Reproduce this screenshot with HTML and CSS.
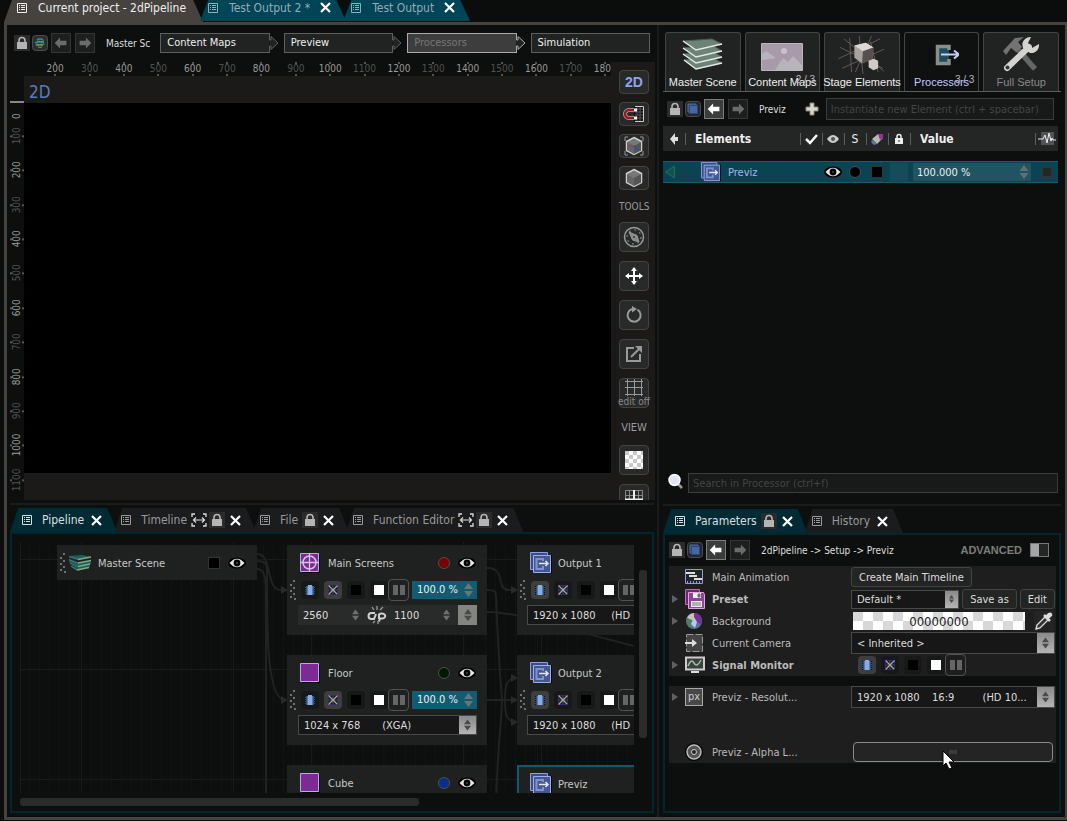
FILE: index.html
```html
<!DOCTYPE html>
<html lang="en">
<head>
    <meta charset="UTF-8">
    <meta name="viewport" content="width=device-width, initial-scale=1.0">
    <title>Current project - 2dPipeline</title>
    <link rel="stylesheet" href="styles.css">
</head>
<body>
    <!-- Icon sprite -->
    <svg class="sprite" aria-hidden="true">
        <symbol id="i-list" viewBox="0 0 10 10">
            <path d="M.5.5h9v9h-9z" fill="none" stroke="currentColor"/>
            <path d="M2 2.500h1M4 2.500h4M2 4.500h1M4 4.500h4M2 6.500h1M4 6.500h4" stroke="currentColor"/>
        </symbol>
        <symbol id="i-close" viewBox="0 0 11 11">
            <path d="M1 1l9 9M10 1l-9 9" stroke="#fff" stroke-width="2.2"/>
        </symbol>
        <symbol id="i-lock" viewBox="0 0 16 16">
            <path d="M0 0h16v16H0z" fill="#2b2b2b"/>
            <path d="M5 8V5.500a3 3 0 0 1 6 0V8" fill="none" stroke="#b5b5b5" stroke-width="1.600"/>
            <path d="M3 7h10v7H3z" fill="#b5b5b5"/>
        </symbol>
        <symbol id="i-lock-small" viewBox="0 0 10 12">
            <path d="M3 6V3.500a2 2 0 0 1 4 0V6" fill="none" stroke="#eee" stroke-width="1.500"/>
            <path d="M1 5h8v6H1z" fill="#eee"/><path d="M4.500 7h1v2h-1z" fill="#333"/>
        </symbol>
        <symbol id="i-left" viewBox="0 0 20 20">
            <path d="M3 10l6-6v3.500h7v5H9V16z" fill="currentColor"/>
        </symbol>
        <symbol id="i-right" viewBox="0 0 20 20">
            <path d="M17 10l-6-6v3.500H4v5h7V16z" fill="currentColor"/>
        </symbol>
        <symbol id="i-layer" viewBox="0 0 16 16">
            <rect x=".5" y=".5" width="15" height="15" rx="3" fill="#252729" stroke="#4a4d50"/>
            <path d="M3 3h8v8H3z" fill="#35507c" stroke="#4a6fa8"/><path d="M4.500 4.500h8v8h-8z" fill="#4568a4" stroke="#2c4775"/>
        </symbol>
        <symbol id="i-globe" viewBox="0 0 16 16">
            <rect x=".5" y=".5" width="15" height="15" rx="3" fill="#2c2d2d" stroke="#4a4d4d"/>
            <path d="M5 4.500q3-1 6 0M3 7.500q4-1 9 0M4 10.500q4-1 7 0" fill="none" stroke="#2a8e98" stroke-width="1.500"/>
            <path d="M5 6q4 1 7 0M3.500 9q4 1 9 0M6 12q2 .5 4 0" fill="none" stroke="#6f9a65"/>
        </symbol>
        <symbol id="i-eye" viewBox="0 0 18 12">
            <ellipse cx="9" cy="6" rx="9" ry="5.500" fill="#000"/>
            <path d="M1.500 6Q9-2.500 16.500 6 9 14.500 1.500 6z" fill="#e8e8e8"/><circle cx="9" cy="6" r="3.400" fill="#050505"/>
            <circle cx="9" cy="6" r="1" fill="#444"/>
        </symbol>
        <symbol id="i-fit" viewBox="0 0 16 14">
            <path d="M4 1H1v3M12 1h3v3M4 13H1v-3M12 13h3v-3" fill="none" stroke="#ddd" stroke-width="1.300"/>
            <path d="M3 7h10M5 4.500L2.500 7 5 9.500M11 4.500L13.500 7 11 9.500" fill="none" stroke="#ddd" stroke-width="1.200"/>
        </symbol>
        <symbol id="i-processor" viewBox="0 0 22 22">
            <path d="M3 3h19v18H3z" fill="#000"/>
            <path d="M.5.5h17v17H.5z" fill="#3c4d86" stroke="#8f9fe4"/>
            <path d="M3.500 3.500h17v17h-17z" fill="#46598f" stroke="#9dacf0"/>
            <path d="M13 9V7H6.500v10H13v-3" fill="none" stroke="#8193cf" stroke-width="2"/>
            <path d="M9 11.500h9M15.500 9l2.500 2.500-2.500 2.500" fill="none" stroke="#dfe6ff" stroke-width="1.500"/>
        </symbol>
        <symbol id="i-screen" viewBox="0 0 20 20">
            <path d="M2 2h18v18H2z" fill="#000"/>
            <path d="M.5.5h18v18H.5z" fill="#7d2a93" stroke="#aab0ee"/>
        </symbol>
        <symbol id="i-target" viewBox="0 0 20 20">
            <path d="M2 2h18v18H2z" fill="#000"/>
            <path d="M.5.5h18v18H.5z" fill="#7d2a93" stroke="#aab0ee"/>
            <circle cx="9.500" cy="9.500" r="6.500" fill="none" stroke="#d7c3dd" stroke-width="1.500"/>
            <path d="M9.500 0v19M0 9.500h19" stroke="#d7c3dd" stroke-width="1.300"/>
        </symbol>
        <symbol id="i-stack" viewBox="0 0 22 18">
            <path d="M0 2l13-1 9 2-13 3zM0 6l9 3 13-2v3L9 12 0 8zM1 10l8 3 12-2v2L9 16z" fill="#1d5f5d"/>
            <path d="M9 5.500L22 3M9 9L22 6.500M9 12.500L21 10M8 16l12-2.500" stroke="#81a989" stroke-width="1.700"/>
            <path d="M0 2.500l9 3M0 5.500L9 9M1 9l8 3.500M2 12l6 4" stroke="#3a7d80" stroke-width="1.200"/>
        </symbol>
        <symbol id="i-dots" viewBox="0 0 8 20">
            <path d="M4 0h2v2H4zM1 4h2v2H1zM4 7h2v2H4zM1 10h2v2H1zM4 13h2v2H4zM1 16h2v2H1zM5 18h2v2H5z" fill="#6f7271"/>
        </symbol>
        <symbol id="i-film" viewBox="0 0 18 18">
            <path d="M4 5h10v9H4z" fill="#245577"/><path d="M6 5h6v9H6z" fill="#5579b0"/><path d="M7 4h4v10H7z" fill="#8eaae0"/>
            <path d="M4.500 5v9M13.500 5v9" stroke="#0b141b" stroke-dasharray="1 1"/>
        </symbol>
        <symbol id="i-cross" viewBox="0 0 18 18">
            <path d="M4.500 4.500h9v9h-9z" fill="#151515" stroke="#28306d"/>
            <path d="M9 5v8M5 9h8" stroke="#555"/>
            <path d="M5 5l8 8M13 5l-8 8" stroke="#a4a7aa" stroke-width="1.300"/>
            <path d="M4 4h2v1H4zM13 4h1v2h-1zM4 13h2v1H4z" fill="#b33a9a"/>
        </symbol>
        <symbol id="i-black" viewBox="0 0 18 18"><path d="M4 4h10v10H4z" fill="#000"/></symbol>
        <symbol id="i-white" viewBox="0 0 18 18"><path d="M4 4h10v10H4z" fill="#fff"/></symbol>
        <symbol id="i-pause" viewBox="0 0 18 18"><path d="M3 4h5v10H3zM10 4h5v10h-5z" fill="#656565"/></symbol>
        <symbol id="i-updown" viewBox="0 0 9 14">
            <path d="M0 6l4.500-6L9 6zM0 8l4.500 6L9 8z" fill="currentColor"/>
        </symbol>
        <symbol id="i-unlink" viewBox="0 0 20 18">
            <path d="M8 7H4.500a3 3 0 0 0 0 6H7l2-5M12 13V8.500a3.500 2.500 0 1 1 3.500 4H13l-1 3" fill="none" stroke="#d0d0d0" stroke-width="2"/>
            <path d="M10 4V0M7 4L5 1M13 4l3-3M11 15v3M8 15l-2 2" stroke="#999" stroke-width="1.300"/>
        </symbol>
        <symbol id="i-cube" viewBox="0 0 20 20">
            <path d="M10 1.500l7.500 4v9l-7.500 4-7.500-4v-9z" fill="#777" stroke="#cfcfcf" stroke-width="1.500"/>
            <path d="M10 10l7-4v8.500l-7 3.500z" fill="#555"/><path d="M3 6l7 4v8l-7-4z" fill="#666"/>
        </symbol>
        <symbol id="i-expand" viewBox="0 0 6 8"><path d="M0 0l6 4-6 4z" fill="#5e6160"/></symbol>
    </svg>

    <nav class="project-tabs">
        <div class="tab current">
            <svg width="10" height="10"><use href="#i-list"/></svg>
            <button class="tab-name">Current project - 2dPipeline</button>
        </div>
        <div class="tab">
            <svg width="10" height="10"><use href="#i-list"/></svg>
            <button class="tab-name">Test Output 2 *</button>
            <button class="tab-close" aria-label="Close"><svg width="11" height="11"><use href="#i-close"/></svg></button>
        </div>
        <div class="tab">
            <svg width="10" height="10"><use href="#i-list"/></svg>
            <button class="tab-name">Test Output</button>
            <button class="tab-close" aria-label="Close"><svg width="11" height="11"><use href="#i-close"/></svg></button>
        </div>
    </nav>

    <main class="frame">
        <div class="left-side">
            <section class="viewer">
                <div class="crumbs">
                    <svg width="16" height="16"><use href="#i-lock"/></svg>
                    <svg width="16" height="16"><use href="#i-globe"/></svg>
                    <button class="arrow" aria-label="Back"><svg width="18" height="18"><use href="#i-left"/></svg></button>
                    <button class="arrow" aria-label="Forward"><svg width="18" height="18"><use href="#i-right"/></svg></button>
                    <span class="crumb-name">Master Sc</span>
                    <div class="steps">
                        <div class="step"><button>Content Maps</button><svg width="11" height="20"><path d="M.5 0v7h1.500V3.500l7 6.500-7 6.500V13H.5v7"/></svg></div>
                        <div class="step"><button>Preview</button><svg width="11" height="20"><path d="M.5 0v7h1.500V3.500l7 6.500-7 6.500V13H.5v7"/></svg></div>
                        <div class="step active"><button>Processors</button><svg width="11" height="20"><path d="M.5 0v7h1.500V3.500l7 6.500-7 6.500V13H.5v7"/></svg></div>
                        <div class="step last"><button>Simulation</button></div>
                    </div>
                </div>
                <div class="stage">
                    <div class="ruler-x">
                        <span>200</span><span>300</span><span>400</span><span>500</span><span>600</span><span>700</span>
                        <span>800</span><span>900</span><span>1000</span><span>1100</span><span>1200</span><span>1300</span>
                        <span>1400</span><span>1500</span><span>1600</span><span>1700</span><span>1800</span>
                    </div>
                    <div class="ruler-y">
                        <b>0</b>
                        <span>100</span><span>200</span><span>300</span><span>400</span><span>500</span><span>600</span>
                        <span>700</span><span>800</span><span>900</span><span>1000</span><span>1100</span>
                    </div>
                    <div class="view">
                        <h2>2D</h2>
                        <div class="picture"></div>
                    </div>
                    <div class="toolbar">
                        <div class="modes">
                            <button class="mode-2d">2D</button>
                            <button aria-label="Snap"><svg width="22" height="18" viewBox="0 0 22 18">
                                <path d="M11 1h10v16H11z" fill="#101010"/><path d="M12 4h9M12 7h9M12 10h9M12 13h9M14 1v16M17 1v16" stroke="#555"/>
                                <path d="M12 1.500h8.500v15H12" fill="none" stroke="#ccc"/>
                                <path d="M11 5H6a4 4 0 0 0 0 8h5" fill="none" stroke="#aaa" stroke-width="4"/>
                                <path d="M11 5H6a4 4 0 0 0 0 8h5" fill="none" stroke="#a3131c" stroke-width="2.500"/>
                                <path d="M11 3.500h3v3h-3zM11 11.500h3v3h-3z" fill="#fff"/></svg></button>
                            <button aria-label="Axis cube"><svg width="20" height="20" viewBox="0 0 20 20"><use href="#i-cube"/>
                                <path d="M4 1H1v4M16 1h3v4M4 19H1v-4M16 19h3v-4" fill="none" stroke="#999"/>
                                <path d="M10 10l4-4" stroke="#4c9b56"/><path d="M10 10H5" stroke="#9b3653"/><path d="M10 10l4 4" stroke="#324fa8" stroke-width="2"/></svg></button>
                            <button aria-label="Cube"><svg width="20" height="20"><use href="#i-cube"/></svg></button>
                        </div>
                        <h3>TOOLS</h3>
                        <div class="tools">
                            <button aria-label="Navigate"><svg width="22" height="22" viewBox="0 0 22 22" fill="none" stroke="#999">
                                <circle cx="11" cy="11" r="9.500" stroke-width="1.500"/><circle cx="11" cy="11" r="7" stroke-dasharray="2 3.500"/>
                                <path d="M6 6l8 3.500 2 6.500-6.500-2z" fill="#888"/><circle cx="11" cy="11" r="1.500" fill="#222"/></svg></button>
                            <button aria-label="Move"><svg width="18" height="18" viewBox="0 0 18 18">
                                <path d="M9 2v14M2 9h14" stroke="#fff" stroke-width="2"/><path d="M9 0l3 4H6zM9 18l3-4H6zM0 9l4-3v6zM18 9l-4-3v6z" fill="#fff"/></svg></button>
                            <button aria-label="Rotate"><svg width="18" height="18" viewBox="0 0 18 18">
                                <path d="M12.500 3.600A6.500 6.500 0 1 1 7 3" fill="none" stroke="#999" stroke-width="2"/><path d="M7 0l5 3-5 3.500z" fill="#999"/></svg></button>
                            <button aria-label="Scale"><svg width="18" height="18" viewBox="0 0 18 18" fill="none" stroke="#999" stroke-width="2">
                                <path d="M9 3H2v13h13V9M6 12l8-8"/><path d="M10 1h7v7z" fill="#999" stroke="none"/></svg></button>
                            <button class="edit" aria-label="Edit grid"><svg width="18" height="17" viewBox="0 0 18 17">
                                <path d="M2.500 0v17M9.500 0v17M16.500 0v17M0 2.500h18M0 8.500h18M0 15.500h18" stroke="#999"/></svg><span>edit off</span></button>
                        </div>
                        <h3 class="view-title">VIEW</h3>
                        <div class="tools">
                            <button aria-label="Checkerboard"><i class="checker"></i></button>
                            <button class="grid-btn" aria-label="Grid"><svg width="18" height="17" viewBox="0 0 18 17">
                                <path d="M.5.5h17v16H.5zM4.500 0v17M13.500 0v17M0 5.500h18M0 13.500h18" fill="none" stroke="#888"/><path d="M9 0v17M0 9.500h18" stroke="#eee" stroke-width="2"/></svg></button>
                        </div>
                    </div>
                </div>
            </section>

            <section class="dock">
                <nav class="dock-tabs">
                    <div class="tab current">
                        <svg width="10" height="10"><use href="#i-list"/></svg>
                        <button class="tab-name">Pipeline</button>
                        <button class="tab-close" aria-label="Close"><svg width="11" height="11"><use href="#i-close"/></svg></button>
                    </div>
                    <div class="tab">
                        <svg width="10" height="10"><use href="#i-list"/></svg>
                        <button class="tab-name">Timeline</button>
                        <span class="tab-tools"><svg width="16" height="14"><use href="#i-fit"/></svg><svg width="16" height="16"><use href="#i-lock"/></svg></span>
                        <button class="tab-close" aria-label="Close"><svg width="11" height="11"><use href="#i-close"/></svg></button>
                    </div>
                    <div class="tab">
                        <svg width="10" height="10"><use href="#i-list"/></svg>
                        <button class="tab-name">File</button>
                        <span class="tab-tools"><svg width="16" height="16"><use href="#i-lock"/></svg></span>
                        <button class="tab-close" aria-label="Close"><svg width="11" height="11"><use href="#i-close"/></svg></button>
                    </div>
                    <div class="tab">
                        <svg width="10" height="10"><use href="#i-list"/></svg>
                        <button class="tab-name">Function Editor</button>
                        <span class="tab-tools"><svg width="16" height="14"><use href="#i-fit"/></svg><svg width="16" height="16"><use href="#i-lock"/></svg></span>
                        <button class="tab-close" aria-label="Close"><svg width="11" height="11"><use href="#i-close"/></svg></button>
                    </div>
                </nav>
                <div class="pane pipeline">
                    <div class="canvas">
                        <svg class="wires" width="1200" height="260">
                            <path class="grid" d="M.5 0v260M61.500 0v260M213.500 0v260M291.500 0v260M443.500 0v260M521.500 0v260M0 17.500h1200M0 127.500h1200M0 237.500h1200"/>
                            <path d="M237 12c16 0 8 36 24 36h4M237 19c12 0 10 6 10 20 0 50 0 119 18 119M237 27c12 0 8 20 9 60v180M467 26c20 0 8 22 22 22h8M467 48c12 0 8 0 10 30 2 40 4 68 5 79 0 20-4 40-6 103M467 70c30 0 60 12 147 34M467 158h30M497 136c-12 0-12 10-12 22s0 22 12 22"/>
                            <path class="head" d="M261 44l7 4-7 4zM261 154l7 4-7 4zM491 44l7 4-7 4zM491 132l7 4-7 4zM491 154l7 4-7 4zM491 176l7 4-7 4z"/>
                        </svg>

                        <article class="node master">
                            <header>
                                <svg width="8" height="20"><use href="#i-dots"/></svg>
                                <svg width="22" height="18"><use href="#i-stack"/></svg>
                                <h4>Master Scene</h4>
                                <i class="swatch"></i>
                                <svg width="18" height="12"><use href="#i-eye"/></svg>
                            </header>
                        </article>

                        <article class="node main-screens">
                            <header>
                                <svg width="20" height="20"><use href="#i-target"/></svg>
                                <h4>Main Screens</h4>
                                <i class="dot red"></i>
                                <svg width="18" height="12"><use href="#i-eye"/></svg>
                            </header>
                            <div class="signals">
                                <svg width="8" height="20"><use href="#i-dots"/></svg>
                                <button aria-label="Film"><svg width="18" height="18"><use href="#i-film"/></svg></button>
                                <button class="on" aria-label="Pattern"><svg width="18" height="18"><use href="#i-cross"/></svg></button>
                                <button aria-label="Black"><svg width="18" height="18"><use href="#i-black"/></svg></button>
                                <button aria-label="White"><svg width="18" height="18"><use href="#i-white"/></svg></button>
                                <button class="pause" aria-label="Pause"><svg width="18" height="18"><use href="#i-pause"/></svg></button>
                                <label class="percent"><input aria-label="Level" value="100.0 %"><svg width="9" height="14"><use href="#i-updown"/></svg></label>
                            </div>
                            <div class="size">
                                <input aria-label="Width" value="2560"><svg width="7" height="14"><use href="#i-updown"/></svg>
                                <svg class="unlink" width="20" height="18"><use href="#i-unlink"/></svg>
                                <input aria-label="Height" value="1100"><svg width="7" height="14"><use href="#i-updown"/></svg>
                                <span class="spin"><svg width="8" height="12"><use href="#i-updown"/></svg></span>
                            </div>
                        </article>

                        <article class="node floor">
                            <header>
                                <svg width="20" height="20"><use href="#i-screen"/></svg>
                                <h4>Floor</h4>
                                <i class="dot green"></i>
                                <svg width="18" height="12"><use href="#i-eye"/></svg>
                            </header>
                            <div class="signals">
                                <svg width="8" height="20"><use href="#i-dots"/></svg>
                                <button aria-label="Film"><svg width="18" height="18"><use href="#i-film"/></svg></button>
                                <button class="on" aria-label="Pattern"><svg width="18" height="18"><use href="#i-cross"/></svg></button>
                                <button aria-label="Black"><svg width="18" height="18"><use href="#i-black"/></svg></button>
                                <button aria-label="White"><svg width="18" height="18"><use href="#i-white"/></svg></button>
                                <button class="pause" aria-label="Pause"><svg width="18" height="18"><use href="#i-pause"/></svg></button>
                                <label class="percent"><input aria-label="Level" value="100.0 %"><svg width="9" height="14"><use href="#i-updown"/></svg></label>
                            </div>
                            <div class="combo">
                                <select aria-label="Resolution"><option>1024 x 768&nbsp;&nbsp;&nbsp;&nbsp;&nbsp;&nbsp;&nbsp;(XGA)</option></select>
                                <span class="spin"><svg width="7" height="12"><use href="#i-updown"/></svg></span>
                            </div>
                        </article>

                        <article class="node cube">
                            <header>
                                <svg width="20" height="20"><use href="#i-screen"/></svg>
                                <h4>Cube</h4>
                                <i class="dot blue"></i>
                                <svg width="18" height="12"><use href="#i-eye"/></svg>
                            </header>
                        </article>

                        <article class="node output-1">
                            <header>
                                <svg width="22" height="22"><use href="#i-processor"/></svg>
                                <h4>Output 1</h4>
                            </header>
                            <div class="signals">
                                <svg width="8" height="20"><use href="#i-dots"/></svg>
                                <button class="on" aria-label="Film"><svg width="18" height="18"><use href="#i-film"/></svg></button>
                                <button aria-label="Pattern"><svg width="18" height="18"><use href="#i-cross"/></svg></button>
                                <button aria-label="Black"><svg width="18" height="18"><use href="#i-black"/></svg></button>
                                <button aria-label="White"><svg width="18" height="18"><use href="#i-white"/></svg></button>
                                <button class="pause" aria-label="Pause"><svg width="18" height="18"><use href="#i-pause"/></svg></button>
                            </div>
                            <div class="combo">
                                <select aria-label="Resolution"><option>1920 x 1080&nbsp;&nbsp;&nbsp;&nbsp;&nbsp;(HD</option></select>
                            </div>
                        </article>

                        <article class="node output-2">
                            <header>
                                <svg width="22" height="22"><use href="#i-processor"/></svg>
                                <h4>Output 2</h4>
                            </header>
                            <div class="signals">
                                <svg width="8" height="20"><use href="#i-dots"/></svg>
                                <button class="on" aria-label="Film"><svg width="18" height="18"><use href="#i-film"/></svg></button>
                                <button aria-label="Pattern"><svg width="18" height="18"><use href="#i-cross"/></svg></button>
                                <button aria-label="Black"><svg width="18" height="18"><use href="#i-black"/></svg></button>
                                <button aria-label="White"><svg width="18" height="18"><use href="#i-white"/></svg></button>
                                <button class="pause" aria-label="Pause"><svg width="18" height="18"><use href="#i-pause"/></svg></button>
                            </div>
                            <div class="combo">
                                <select aria-label="Resolution"><option>1920 x 1080&nbsp;&nbsp;&nbsp;&nbsp;&nbsp;(HD</option></select>
                            </div>
                        </article>

                        <article class="node previz">
                            <header>
                                <svg width="22" height="22"><use href="#i-processor"/></svg>
                                <h4>Previz</h4>
                            </header>
                        </article>
                    </div>
                    <div class="scroll-y"><i></i></div>
                    <div class="scroll-x"><i></i></div>
                </div>
            </section>
        </div>

        <div class="right-side">
            <section class="browser">
                <nav class="scene-tabs">
                    <button>
                        <svg width="44" height="36" viewBox="0 0 44 36"><g fill="#6e8378" stroke="#4d5d55">
                            <path d="M3 23l28-3 10 6-26 6z"/><path d="M2 17l29-3 10 6-26 6z"/><path d="M2 11l29-3 10 6-26 6z"/><path d="M2 4l29-2 10 5-26 6z"/></g>
                            <path d="M2 4l13 9 26-6M2 11l13 9 26-6M2 17l13 9 26-6M3 23l12 9 26-6" fill="none" stroke="#e6ebe6" stroke-width="1.500"/></svg>
                        <span>Master Scene</span>
                    </button>
                    <button>
                        <svg width="44" height="36" viewBox="0 0 44 36"><path d="M1.500 6.500h41v27h-41z" fill="#a99aab" stroke="#b9b5b9"/>
                            <path d="M2 17l4-3 10 7-14 2zM15 33l8-12 5 4 5-6 9 9v5z" fill="#b9b4bb"/><circle cx="24" cy="14" r="3" fill="#c8c0c8"/></svg>
                        <span>Content Maps</span>
                        <em>2 / 3</em>
                    </button>
                    <button>
                        <svg width="50" height="40" viewBox="0 0 50 40"><path d="M12 2l2 36M22 0l4 40M35 0L18 38M2 12l45 22M0 24L44 3M6 3l42 34M4 34L48 14M34 6l8 32" stroke="#625c5a"/>
                            <path d="M17 10l12-3 8 5-1 12-11 5-8-6z" fill="#a8a3a0"/><path d="M17 10l12-3 8 5-11 4z" fill="#ddd8d4"/><path d="M26 16l11-4-1 12-11 5z" fill="#55504d"/>
                            <path d="M32 26l5-2 5 2v8l-5 2-5-3z" fill="#d1cbc8"/></svg>
                        <span>Stage Elements</span>
                    </button>
                    <button class="active">
                        <svg width="34" height="36" viewBox="0 0 34 36"><path d="M12 10h12v16H12z" fill="#1f4d5e"/><path d="M24 13V9.500H12.500v17H24V22" fill="none" stroke="#8c8c8c" stroke-width="3.500"/>
                            <path d="M16 17.500h17M29 13.500l5 4-5 4" fill="none" stroke="#c9cdf6" stroke-width="2"/></svg>
                        <span>Processors</span>
                        <em>3 / 3</em>
                    </button>
                    <button class="setup">
                        <svg width="40" height="38" viewBox="0 0 40 38"><path d="M14 10l20 23" stroke="#666" stroke-width="5.500"/><path d="M2 15L14 2l9-1-6 5 4 5-6 5-5-4-5 7z" fill="#737373"/>
                            <path d="M6 32L28 11" stroke="#d3d3d0" stroke-width="6" stroke-linecap="round"/>
                            <path d="M24 3a8 8 0 0 1 6-2l-3 6 4 5 7-4a8 8 0 0 1-9 9l-7-5a8 8 0 0 1 2-9z" fill="#d3d3d0"/><circle cx="6.500" cy="31.500" r="2" fill="#333"/></svg>
                        <span>Full Setup</span>
                    </button>
                </nav>

                <div class="crumbs">
                    <svg width="16" height="16"><use href="#i-lock"/></svg>
                    <svg width="16" height="16"><use href="#i-layer"/></svg>
                    <button class="arrow on" aria-label="Back"><svg width="18" height="18"><use href="#i-left"/></svg></button>
                    <button class="arrow" aria-label="Forward"><svg width="18" height="18"><use href="#i-right"/></svg></button>
                    <span class="crumb-name">Previz</span>
                    <svg class="plus" width="14" height="14" viewBox="0 0 14 14"><path d="M5 1h4v4h4v4H9v4H5V9H1V5h4z" fill="#d9d5cf" stroke="#8d8378"/></svg>
                    <input class="field" aria-label="New element" placeholder="Instantiate new Element (ctrl + spacebar)">
                </div>

                <table class="elements">
                    <thead>
                        <tr>
                            <th class="c-arrow"><svg width="9" height="12" viewBox="0 0 9 12"><path d="M0 6l5-6v4h3v4H5v4z" fill="#ddd"/></svg></th>
                            <th class="c-name">Elements</th>
                            <th class="c-icon"><svg width="14" height="12" viewBox="0 0 14 12"><path d="M2 6l4 4 7-8" fill="none" stroke="#fff" stroke-width="2.500"/></svg></th>
                            <th class="c-icon"><svg width="12" height="8" viewBox="0 0 12 8"><path d="M0 4q6-8 12 0-6 8-12 0z" fill="#ccc"/><circle cx="6" cy="4" r="2" fill="#555"/></svg></th>
                            <th class="c-icon">S</th>
                            <th class="c-icon"><svg width="13" height="12" viewBox="0 0 13 12"><path d="M1 6l6-5h5v4l-6 6z" fill="#b5bda5"/><path d="M7 1h5v4l-3 2z" fill="#9a2fa0"/><path d="M1 7l5 4-3 1-3-3z" fill="#5c77c9"/></svg></th>
                            <th class="c-icon"><svg width="10" height="12"><use href="#i-lock-small"/></svg></th>
                            <th class="c-value">Value</th>
                            <th class="c-pulse"><svg width="18" height="16" viewBox="0 0 18 16"><path d="M3 1h13v13H3z" fill="#505354"/><path d="M0 8h5l2-4 2 8 2-10 2 8 1-3 1 2h3" fill="none" stroke="#eee"/></svg></th>
                        </tr>
                    </thead>
                    <tbody>
                        <tr>
                            <td class="c-arrow"><svg width="10" height="14" viewBox="0 0 10 14"><path d="M9.500 1v12L.5 7z" fill="#0e5548" stroke="#1c6d66"/></svg></td>
                            <td class="c-name"><svg width="22" height="22"><use href="#i-processor"/></svg><span>Previz</span></td>
                            <td colspan="2" class="c-eye"><svg width="18" height="12"><use href="#i-eye"/></svg></td>
                            <td class="c-icon"><i class="dot black"></i></td>
                            <td class="c-icon"><i class="swatch"></i></td>
                            <td class="c-icon"><i class="blank"></i></td>
                            <td class="c-value"><label><input aria-label="Value" value="100.000 %"><svg width="10" height="14"><use href="#i-updown"/></svg></label></td>
                            <td class="c-pulse"><i class="swatch gray"></i></td>
                        </tr>
                    </tbody>
                </table>

                <div class="search">
                    <svg width="15" height="16" viewBox="0 0 15 16"><path d="M10 11l4 4" stroke="#999" stroke-width="2.500"/><circle cx="6.500" cy="7" r="5.500" fill="#dfe5f5" stroke="#fff" stroke-width="1.500"/></svg>
                    <input class="field" aria-label="Search" placeholder="Search in Processor (ctrl+f)">
                </div>
            </section>

            <section class="dock">
                <nav class="dock-tabs">
                    <div class="tab current">
                        <svg width="10" height="10"><use href="#i-list"/></svg>
                        <button class="tab-name">Parameters</button>
                        <span class="tab-tools"><svg width="16" height="16"><use href="#i-lock"/></svg></span>
                        <button class="tab-close" aria-label="Close"><svg width="11" height="11"><use href="#i-close"/></svg></button>
                    </div>
                    <div class="tab">
                        <svg width="10" height="10"><use href="#i-list"/></svg>
                        <button class="tab-name">History</button>
                        <button class="tab-close" aria-label="Close"><svg width="11" height="11"><use href="#i-close"/></svg></button>
                    </div>
                </nav>
                <div class="pane params">
                    <div class="crumbs">
                        <svg width="16" height="16"><use href="#i-lock"/></svg>
                        <svg width="16" height="16"><use href="#i-layer"/></svg>
                        <button class="arrow on" aria-label="Back"><svg width="18" height="18"><use href="#i-left"/></svg></button>
                        <button class="arrow" aria-label="Forward"><svg width="18" height="18"><use href="#i-right"/></svg></button>
                        <span class="crumb-name">2dPipeline -&gt; Setup -&gt; Previz</span>
                        <label class="advanced">ADVANCED <input type="checkbox"></label>
                    </div>

                    <div class="rows">
                        <div class="row">
                            <i></i>
                            <svg width="18" height="16" viewBox="0 0 18 16"><path d="M.5.500h17v14H.5z" fill="#22242b" stroke="#8f9be0"/><path d="M1 3h9v2H1zM4 6h8v2H4zM9 9h8v2H9z" fill="#ddd"/><path d="M2 13.500h15" stroke="#8f9be0" stroke-width="3" stroke-dasharray="1 2"/></svg>
                            <span class="name">Main Animation</span>
                            <div class="control"><button class="btn">Create Main Timeline</button></div>
                        </div>
                        <div class="row strong">
                            <svg width="6" height="8"><use href="#i-expand"/></svg>
                            <svg width="20" height="20" viewBox="0 0 20 20"><path d="M.5.500h14v15H.5z" fill="#74227d" stroke="#b070b8"/><path d="M3.500 3.500h15l1 2v14h-16z" fill="#8b4693" stroke="#d9a9dd"/><path d="M8 4h8v5H8zM6 12h11v6H6z" fill="#eee"/><path d="M13 5h2v3h-2zM7 14h9M7 16h9" fill="#555" stroke="#777"/></svg>
                            <span class="name">Preset</span>
                            <div class="control">
                                <div class="combo preset"><select aria-label="Preset"><option>Default *</option></select><span class="spin"><svg width="5" height="8"><use href="#i-updown"/></svg></span></div>
                                <button class="btn">Save as</button>
                                <button class="btn">Edit</button>
                            </div>
                        </div>
                        <div class="row">
                            <svg width="6" height="8"><use href="#i-expand"/></svg>
                            <svg width="18" height="18" viewBox="0 0 18 18"><circle cx="9" cy="9" r="8" fill="#5c6f95"/><path d="M9 9V1a8 8 0 0 1 7 11z" fill="#7a2e96"/><path d="M9 9l-7-3a8 8 0 0 1 7-5z" fill="#c9c3b5"/><path d="M9 9l-7-3a8 8 0 0 0 3 9z" fill="#4d8060"/><path d="M9 5l3 5-2 6-4-4z" fill="#b8c8ee"/></svg>
                            <span class="name">Background</span>
                            <div class="control">
                                <input class="color" aria-label="Background colour" value="00000000">
                                <svg class="picker" width="20" height="20" viewBox="0 0 20 20"><path d="M0 0h20v20H0z" fill="#242424"/><path d="M2 18l1-4 8-8 3 3-8 8z" fill="#333" stroke="#ddd" stroke-width="1.300"/><path d="M10 4l6 6M12 6l3-3q2-1 2 1l-3 3" fill="none" stroke="#ddd" stroke-width="2.500"/></svg>
                            </div>
                        </div>
                        <div class="row">
                            <i></i>
                            <svg width="18" height="18" viewBox="0 0 18 18"><path d="M1.500.500h16v17h-16z" fill="#444" stroke="#999" stroke-dasharray="7 2"/><path d="M0 8h7V5l5 4-5 4v-3H0z" fill="#ddd"/></svg>
                            <span class="name">Current Camera</span>
                            <div class="control"><div class="combo"><select aria-label="Current Camera"><option>&lt; Inherited &gt;</option></select><span class="spin"><svg width="7" height="12"><use href="#i-updown"/></svg></span></div></div>
                        </div>
                        <div class="row strong">
                            <svg width="6" height="8"><use href="#i-expand"/></svg>
                            <svg width="20" height="18" viewBox="0 0 20 18"><path d="M1 1.500h18v12H1z" fill="#37423b" stroke="#ccc" stroke-width="2"/><path d="M3 10q3-8 6-3t7-3" fill="none" stroke="#a8b6a8" stroke-width="1.500"/><path d="M6 15h8v2H6z" fill="#ddd"/></svg>
                            <span class="name">Signal Monitor</span>
                            <div class="control signals">
                                <button class="on" aria-label="Film"><svg width="18" height="18"><use href="#i-film"/></svg></button>
                                <button aria-label="Pattern"><svg width="18" height="18"><use href="#i-cross"/></svg></button>
                                <button aria-label="Black"><svg width="18" height="18"><use href="#i-black"/></svg></button>
                                <button aria-label="White"><svg width="18" height="18"><use href="#i-white"/></svg></button>
                                <button class="pause" aria-label="Pause"><svg width="18" height="18"><use href="#i-pause"/></svg></button>
                            </div>
                        </div>
                    </div>

                    <div class="rows">
                        <div class="row">
                            <svg width="6" height="8"><use href="#i-expand"/></svg>
                            <span class="px">px</span>
                            <span class="name">Previz - Resolut...</span>
                            <div class="control"><div class="combo"><select aria-label="Previz - Resolution"><option>1920 x 1080&nbsp;&nbsp;&nbsp;&nbsp;16:9&nbsp;&nbsp;&nbsp;&nbsp;&nbsp;&nbsp;&nbsp;&nbsp;&nbsp;(HD 10...</option></select><span class="spin"><svg width="7" height="12"><use href="#i-updown"/></svg></span></div></div>
                        </div>
                        <div class="row alpha">
                            <i></i>
                            <svg width="18" height="18" viewBox="0 0 18 18"><circle cx="9" cy="9" r="9" fill="#000"/><circle cx="9" cy="9" r="7" fill="#555" stroke="#bbb" stroke-width="1.500"/><circle cx="9" cy="9" r="2.500" fill="#222" stroke="#ccc"/></svg>
                            <span class="name">Previz - Alpha L...</span>
                            <div class="control">
                                <button class="drop" aria-label="Alpha layer"><i></i></button>
                                <svg class="cursor" width="13" height="20" viewBox="0 0 13 20"><path d="M1 1v15l3-3 3 6 3-1-3-6h5z" fill="#fff" stroke="#000"/></svg>
                            </div>
                        </div>
                    </div>
                </div>
            </section>
        </div>
    </main>
</body>
</html>
```
FILE: styles.css
```css
* {
    box-sizing: border-box;
}

body {
    margin: 0;
    padding: 0 0 1px 4px;
    height: 100vh;
    display: flex;
    flex-direction: column;
    overflow: hidden;
    background-color: #0b0d0d;
    color: #ddd;
    font-family: "DejaVu Sans Condensed", "DejaVu Sans", sans-serif;
    font-size: 11px;
    line-height: 14px;
}

svg {
    display: block;
    flex: none;
}

i {
    display: block;
    flex: none;
}

button,
input,
select {
    font: inherit;
    color: inherit;
    margin: 0;
    padding: 0;
    border: none;
    border-radius: 0;
    background: none;
    outline: none;
    min-width: 0;
}

select {
    appearance: none;
}

h2, h3, h4 {
    margin: 0;
    font-weight: normal;
}

.sprite {
    position: absolute;
    width: 0;
    height: 0;
}

/* Tabs */
.project-tabs,
.dock-tabs {
    display: flex;
    flex: none;
    font-size: 12px;
}

.tab {
    display: flex;
    align-items: center;
    color: #999;
    white-space: nowrap;
    clip-path: polygon(8px 0, calc(100% - 10px) 0, 100% 100%, 0 100%);
}

.tab-name {
    margin-left: 10px;
}

.tab-close {
    margin-left: 7px;
}

.tab-tools {
    display: flex;
    align-items: center;
    gap: 2px;
    margin: 0 -2px 0 4px;
}

.project-tabs {
    height: 22px;
}

.project-tabs .tab {
    padding: 0 15px 6px 8px;
    margin-right: -3px;
    background-color: #004458;
    color: #9aa9b5;
    height: 21px;
}

.project-tabs .tab-name {
    margin-left: 11px;
}

.project-tabs .tab-close {
    margin-left: 10px;
}

.project-tabs .tab.current {
    height: 22px;
    padding: 0 17px 6px 13px;
    background-color: #46423e;
    color: #eee;
}

.dock-tabs {
    height: 24px;
}

.dock-tabs .tab {
    padding: 0 15px 0 7px;
    margin-right: -3px;
    background-color: #1b1c1e;
}

.dock-tabs .tab.current {
    padding-left: 12px;
    background-color: #002b35;
    color: #ddd;
}

/* Window frame */
.frame {
    flex: 1;
    min-height: 0;
    display: grid;
    grid-template-columns: minmax(0, 1fr) 408px;
    border: 3px solid #46423e;
    border-right-width: 2px;
    background-color: #0d0f0e;
}

.left-side,
.right-side {
    min-height: 0;
    min-width: 0;
    display: grid;
    grid-template-columns: minmax(0, 1fr);
    grid-template-rows: minmax(0, 1fr) 317px;
}

.right-side {
    border-left: 2px solid #1a1c1b;
    padding: 0 4px;
}

.dock {
    display: flex;
    flex-direction: column;
    min-width: 0;
    padding: 3px 3px 4px;
}

.dock::before {
    content: "";
    height: 2px;
    margin-bottom: 3px;
    flex: none;
    background-color: #1a1c1c;
}

.right-side .dock {
    padding: 4px 0;
}

.pane {
    flex: 1;
    min-height: 0;
    border: 2px solid #00262f;
}

/* Breadcrumb bars */
.crumbs {
    display: flex;
    align-items: center;
    gap: 3px;
    height: 20px;
    font-size: 10px;
}

.crumbs > svg + svg {
    margin-left: -1px;
}

.arrow {
    width: 20px;
    height: 20px;
    border: 1px solid #343636;
    background-color: #1d1e1e;
    color: #6b6b6b;
}

.arrow + .arrow {
    margin-left: 1px;
}

.arrow.on {
    border-color: #7b7d7c;
    background-color: #3b3d3c;
    color: #fff;
}

.crumb-name {
    margin-left: 8px;
    padding-top: 2px;
    white-space: nowrap;
}

/* Viewer */
.viewer {
    display: flex;
    flex-direction: column;
    min-height: 0;
    padding: 8px 2px 0 3px;
}

.viewer .crumbs {
    padding: 0 5px 0 4px;
}

.steps {
    display: flex;
    flex: 1;
    gap: 4px;
    margin-left: 7px;
    font-size: 11px;
}

.step {
    display: flex;
    flex: 1;
    height: 20px;
    color: #eee;
}

.step button {
    flex: 1;
    padding-left: 6px;
    text-align: left;
    border: 1px solid #5d605f;
    border-right: none;
    background-color: #202322;
}

.step svg {
    fill: #202322;
    stroke: #5d605f;
}

.step.active button {
    background-color: #3d3d3d;
    border-color: #aaa;
    color: #777;
}

.step.active svg {
    stroke: #aaa;
}

.step.last button {
    border-right: 1px solid #5d605f;
}

.stage {
    flex: 1;
    min-height: 0;
    margin-top: 9px;
    display: grid;
    grid-template-columns: 14px minmax(0, 1fr) 44px;
    grid-template-rows: 14px minmax(0, 1fr);
}

.ruler-x {
    grid-column: 2;
    display: flex;
    overflow: hidden;
    padding-left: 14px;
    font-size: 10px;
    color: #999;
}

.ruler-x span {
    flex: 0 0 6%;
    text-align: center;
    background: linear-gradient(#555, #555) center top / 2px 2px no-repeat, linear-gradient(#555, #555) center bottom / 2px 2px no-repeat;
}

.ruler-x span:nth-child(even),
.ruler-y span:nth-child(even) {
    color: #515251;
}

.ruler-y {
    grid-row: 2;
    display: flex;
    flex-direction: column;
    min-height: 0;
    margin-top: 25px;
    padding-bottom: 3px;
    border-top: 2px solid #8b8788;
    font-size: 10px;
    color: #999;
}

.ruler-y b,
.ruler-y span {
    writing-mode: vertical-rl;
    transform: rotate(180deg);
    text-align: center;
    line-height: 14px;
    font-weight: normal;
}

.ruler-y b {
    height: 16px;
    text-align: left;
}

.ruler-y span {
    flex: 1;
    min-height: 0;
    background: linear-gradient(#555, #555) left center / 2px 2px no-repeat, linear-gradient(#555, #555) right center / 2px 2px no-repeat;
}

.view {
    display: flex;
    flex-direction: column;
    background-color: #1c1a19;
    padding-bottom: 27px;
}

.view h2 {
    height: 27px;
    padding: 3px 0 0 5px;
    font-size: 17px;
    line-height: 27px;
    color: #5480bd;
}

.picture {
    flex: 1;
    background-color: #000;
}

.toolbar {
    grid-column: 3;
    grid-row: 1 / 3;
    overflow: hidden;
    padding: 8px 6px 0 8px;
    background-color: #1c1a19;
}

.toolbar h3 {
    padding-top: 2px;
    font-size: 10px;
    line-height: 30px;
    text-align: center;
    white-space: nowrap;
    color: #999;
}

.toolbar .view-title {
    padding-top: 3px;
    font-size: 11px;
    line-height: 34px;
}

.modes,
.tools {
    display: grid;
    gap: 8px;
}

.tools {
    gap: 9px;
}

.toolbar button {
    display: grid;
    place-items: center;
    height: 24px;
    border: 1px solid #414443;
    border-radius: 4px;
    background-color: #282929;
}

.tools button {
    height: 30px;
}

.toolbar .mode-2d {
    font: bold 14px "Liberation Sans", Arial, sans-serif;
    color: #8fa4e8;
}

.toolbar .edit {
    justify-content: center;
    font-size: 10px;
    line-height: 10px;
    color: #888;
    white-space: nowrap;
}

.checker {
    width: 18px;
    height: 18px;
    background: repeating-conic-gradient(#fff 0 25%, #c9c9c9 0 50%) 0 0 / 8px 8px;
}

.toolbar .grid-btn {
    place-items: start center;
    padding-top: 5px;
}

/* Pipeline canvas */
.pipeline {
    display: grid;
    grid-template-columns: minmax(0, 1fr) 8px;
    grid-template-rows: minmax(0, 1fr) 8px;
    gap: 5px;
    padding: 8px 5px 5px 8px;
}

.canvas {
    position: relative;
    overflow: hidden;
    background: repeating-linear-gradient(90deg, #121414 0 1px, transparent 1px 10px) 61px 0 / 152px 100%;
}

.wires {
    position: absolute;
    left: 0;
    top: 0;
    fill: none;
    stroke: #202322;
    stroke-width: 2;
}

.wires .grid {
    stroke: #181b1a;
    stroke-width: 1;
}

.wires .head {
    fill: #272a29;
    stroke: none;
}

.node {
    position: absolute;
    width: 200px;
    height: 90px;
    background-color: rgba(33, 35, 34, 0.92);
}

.node.master { left: 37px; top: 3px; height: 35px; }
.node.main-screens { left: 267px; top: 3px; }
.node.floor { left: 267px; top: 113px; }
.node.cube { left: 267px; top: 223px; }
.node.output-1 { left: 497px; top: 3px; }
.node.output-2 { left: 497px; top: 113px; }
.node.previz { left: 497px; top: 223px; border: 2px solid #0d5b70; }

.node header {
    display: flex;
    align-items: center;
    height: 34px;
    padding: 2px 11px 0 13px;
    color: #c8c8c8;
}

.node.master header {
    padding-left: 2px;
    gap: 2px;
}

.node.previz header {
    padding: 0 11px;
}

.node h4 {
    flex: 1;
    margin-left: 8px;
    padding-top: 2px;
}

.node.master h4 {
    margin-left: 5px;
}

.output-1 h4,
.output-2 h4,
.previz h4 {
    margin-left: 6px;
}

.dot {
    width: 12px;
    height: 12px;
    margin-right: 8px;
    border: 1px solid #4c4f4e;
    border-radius: 50%;
}

.dot.red { background-color: #7b0000; }
.dot.green { background-color: #001a02; }
.dot.blue { background-color: #06308c; }
.dot.black { background-color: #000; }

.swatch {
    width: 12px;
    height: 12px;
    border: 1px solid #333;
    background-color: #000;
}

.master .swatch {
    margin-right: 6px;
}

.signals {
    display: flex;
    align-items: center;
    gap: 5px;
    height: 21px;
    padding-left: 2px;
}

.signals > svg {
    margin-right: -1px;
}

.signals button {
    flex: none;
    width: 18px;
    height: 18px;
    border-radius: 4px;
    background-color: #171818;
}

.signals .on {
    background-color: #3d3e3e;
}

.signals .pause {
    display: grid;
    place-items: center;
    width: 21px;
    height: 22px;
    margin-left: -5px;
    border: 1px solid #505251;
    background: none;
}

.percent {
    display: flex;
    align-items: center;
    width: 65px;
    height: 18px;
    margin-left: -2px;
    padding: 0 4px 0 5px;
    background-color: #125c73;
    color: #6d7472;
}

.percent input {
    width: 47px;
    color: #eee;
}

.size,
.combo {
    display: flex;
    align-items: center;
    height: 20px;
}

.node .size,
.node .combo {
    margin: 5px 10px 0 11px;
}

.output-1 .combo,
.output-2 .combo {
    margin-left: 10px;
}

.size {
    background-color: #292b2a;
    color: #6d706f;
}

.size input {
    flex: 1;
    width: 0;
    padding: 1px 0 0 5px;
    color: #ddd;
}

.size .unlink {
    margin: 0 2px 0 8px;
}

.size .spin {
    margin-left: 8px;
}

.combo {
    flex: 1;
    min-width: 0;
    border: 1px solid #484a49;
    background-color: #171717;
    color: #ddd;
}

.combo select {
    flex: 1;
    height: 100%;
    padding: 2px 0 0 5px;
    white-space: pre;
}

.spin {
    display: grid;
    place-items: center;
    flex: none;
    width: 17px;
    align-self: stretch;
    background: linear-gradient(#8a8a8a, #b4b4b4);
    color: #4a4a4a;
}

.size .spin {
    width: 19px;
    background: #82867f;
}

.scroll-y {
    padding: 28px 0 55px;
}

.scroll-y i {
    height: 100%;
    border-radius: 3px;
    background-color: #2a2c2b;
}

.scroll-x i {
    width: 65%;
    height: 8px;
    border-radius: 3px;
    background-color: #2a2c2b;
}

/* Element browser */
.browser {
    min-height: 0;
    display: flex;
    flex-direction: column;
    padding-top: 7px;
}

.scene-tabs {
    display: flex;
    gap: 4px;
    height: 60px;
    padding: 0 2px;
    border-bottom: 1px solid #5b5d5c;
    font: 11px/14px "Liberation Sans", Arial, sans-serif;
}

.scene-tabs button {
    position: relative;
    flex: 1;
    display: flex;
    flex-direction: column;
    align-items: center;
    justify-content: space-between;
    padding: 3px 0 2px;
    border: 1px solid #434544;
    border-bottom: none;
    border-radius: 3px 3px 0 0;
    background-color: #212222;
    color: #eee;
    white-space: nowrap;
}

.scene-tabs svg {
    height: 38px;
}

/* counter drawn over the end of the caption */
.scene-tabs em {
    position: absolute;
    right: 4px;
    bottom: 4px;
    font-size: 10px;
    font-style: normal;
    color: #bbb;
}

.scene-tabs .active {
    background-color: #0f1111;
    color: #c5c8ff;
}

.scene-tabs .setup {
    color: #888;
}

.browser .crumbs {
    margin: 7px 7px 0 4px;
}

.plus {
    margin: 0 4px 0 16px;
}

.field {
    flex: 1;
    height: 22px;
    padding: 0 4px;
    border: 1px solid #3b3d3c;
    background-color: #181919;
    font-size: 11px;
}

.field::placeholder {
    color: #434544;
    opacity: 1;
}

.elements {
    width: calc(100% - 3px);
    margin-top: -3px;
    table-layout: fixed;
    border-collapse: separate;
    border-spacing: 0 10px;
}

.elements th {
    height: 25px;
    padding: 0;
    background: linear-gradient(#5b5e5d, #5b5e5d) left center / 1px 12px no-repeat #242525;
    font-size: 12px;
    text-align: left;
    color: #eee;
}

.elements td {
    height: 22px;
    padding: 0;
    background-color: #0b4352;
    border: solid #175d6e;
    border-width: 1px 0;
}

.elements svg,
.elements i {
    margin: auto;
}

.elements .c-arrow { width: 22px; background-image: none; }
.elements .c-name { width: auto; padding-left: 10px; }
.elements .c-icon { width: 22px; text-align: center; font-weight: normal; }
.elements .c-value { width: 125px; padding-left: 10px; }
.elements .c-pulse { width: 23px; }

.elements td.c-arrow svg {
    margin-left: 2px;
}

.elements td.c-name {
    padding-left: 15px;
    color: #a5b4f0;
}

.c-name svg,
.c-name span {
    display: inline-block;
    vertical-align: middle;
}

.c-name span {
    margin-left: 6px;
    padding-top: 1px;
}

.elements td.c-name svg {
    height: 20px;
}

.elements .c-eye svg {
    margin-right: 2px;
}

.elements .swatch.gray {
    width: 10px;
    height: 10px;
    background-color: #262626;
}

.blank {
    width: 18px;
    height: 18px;
    background-color: #154c5a;
}

.elements td.c-value {
    padding: 0 4px 0 3px;
}

.c-value label {
    display: flex;
    align-items: center;
    height: 18px;
    padding: 0 2px 0 4px;
    background-color: #215462;
    color: #65706e;
}

.c-value input {
    flex: 1;
    padding-top: 1px;
    color: #eee;
}

.elements .c-value svg {
    margin: 0;
}

.search {
    display: flex;
    gap: 5px;
    margin: auto 3px 7px 5px;
}

.search .field {
    height: 20px;
}

/* Parameters */
.params {
    padding: 5px 3px 0 4px;
}

.params .crumbs {
    margin-bottom: 6px;
}

.advanced {
    display: flex;
    align-items: center;
    gap: 8px;
    margin: 0 7px 0 auto;
    font: bold 11px "Liberation Sans", Arial, sans-serif;
    color: #7c7c7c;
}

.advanced input {
    appearance: none;
    width: 19px;
    height: 14px;
    border: 1px solid #777;
    background: linear-gradient(90deg, #a3a5a8 50%, #252525 50%);
}

.rows {
    background-color: #1e1e1e;
    margin-bottom: 10px;
}

.row {
    display: grid;
    grid-template-columns: 6px 20px 129px minmax(0, 1fr);
    column-gap: 8px;
    align-items: center;
    height: 22px;
    padding-left: 3px;
    color: #bbb;
}

.row > .name {
    margin-left: -2px;
    padding-top: 2px;
}

.row > svg:nth-child(2),
.row > .px {
    margin-left: -1px;
}

.row.strong .name {
    font-weight: bold;
}

.row .control {
    display: flex;
    align-items: center;
    gap: 3px;
    margin-right: 1px;
    color: #ddd;
}

.row .combo {
    height: 22px;
}

.row .combo.preset {
    height: 19px;
}

.preset .spin {
    width: 13px;
}

.row .control.signals {
    gap: 5px;
    padding-left: 7px;
}

.btn {
    height: 20px;
    padding: 1px 7px 0;
    border: 1px solid #424443;
    border-radius: 3px;
    background-color: #232424;
    white-space: nowrap;
}

.color {
    flex: 1;
    height: 18px;
    margin-left: 2px;
    text-align: center;
    font-size: 13px;
    color: #222;
    background: repeating-conic-gradient(#fff 0 25%, #d8d8d8 0 50%) 0 0 / 20px 18px;
}

.picker {
    margin: 0 1px 0 6px;
}

.px {
    width: 18px;
    height: 18px;
    border: 1px solid #aaa;
    background-color: #484848;
    line-height: 15px;
    text-align: center;
    color: #ccc;
}

.row.alpha {
    margin-top: 33px;
}

.alpha .control {
    position: relative;
}

.drop {
    flex: 1;
    height: 20px;
    margin: 0 2px;
    border: 1px solid #8b8b8b;
    border-radius: 4px;
    background-color: #242424;
}

.drop i {
    width: 8px;
    height: 4px;
    margin: auto;
    background-color: #3b3b3b;
}

.cursor {
    position: absolute;
    left: 91px;
    top: 8px;
}
```
